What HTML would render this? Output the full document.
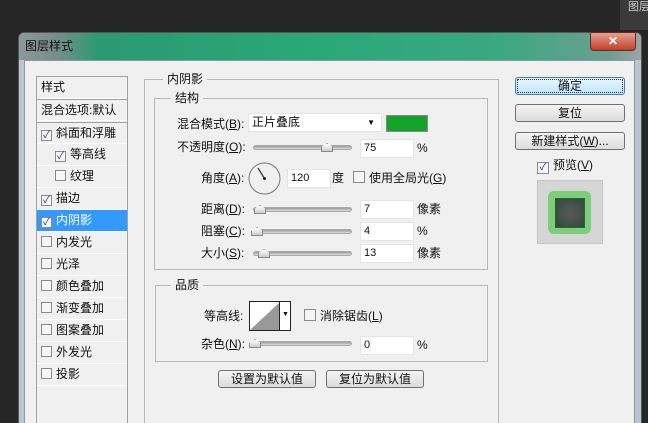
<!DOCTYPE html><html><head><meta charset="utf-8"><style>
*{margin:0;padding:0;box-sizing:border-box}
html{width:648px;height:423px;overflow:hidden}
body{width:648px;height:423px;background:#262626;position:relative;overflow:hidden;font-family:"Liberation Sans","Noto Sans CJK SC",sans-serif;font-size:12px;color:#111}
.a{position:absolute}
.t{position:absolute;white-space:nowrap;line-height:14px}
.frame{left:18px;top:32px;width:624px;height:400px;background:#b9c6cf;border-radius:6px 6px 0 0;border:1px solid #555}
.title{left:19px;top:33px;width:622px;height:27px;border-radius:5px 5px 0 0;background:linear-gradient(90deg,#8a9a98 0,#7a8e8c 35px,#2a9a70 80px,#2aa878 300px,#3aa880 480px,#6aa090 590px,#9aa4a8 622px)}
.client{left:24px;top:60px;width:611px;height:370px;background:#f0f0f0;border:1px solid #8a9aa4}
.lp{left:36px;top:76px;width:92px;height:360px;border:1px solid #a0a0a0;background:#f0f0f0}
.li{position:absolute;left:0;width:90px;height:22px;border-bottom:1px solid #fff;line-height:21px;padding-left:4px}
.cb{display:inline-block;width:11px;height:11px;border:1px solid #8a8a8a;background:#f6f6f6;vertical-align:-1px;margin-right:4px;font-size:10px;line-height:9px;text-align:center;color:#2a2a8a}
.gb{position:absolute;border:1px solid #b8b8b8}
.gl{position:absolute;background:#f0f0f0;padding:0 4px;line-height:14px}
.inp{position:absolute;height:19px;background:#fff;border:1px solid #e4e4e4;padding-left:3px;line-height:17px;font-size:11px}
.tr{position:absolute;height:5px;background:linear-gradient(#999,#ddd);border-radius:3px;border:1px solid #aaa}
.th{position:absolute;width:12px;height:9px;background:linear-gradient(#fff,#ccc);border:1px solid #888;clip-path:polygon(50% 0,100% 45%,100% 100%,0 100%,0 45%)}
.btn{position:absolute;height:18px;border:1px solid #707070;border-radius:3px;background:linear-gradient(#f4f4f4,#dcdcdc);text-align:center;line-height:16px}
</style></head><body>
<div class="a" style="left:620px;top:0;width:28px;height:30px;background:#3a3a3a"></div>
<div class="t" style="left:628px;top:0;color:#ccc;font-size:11px">图层</div>
<div class="a frame"></div>
<div class="a title"></div>
<div class="t" style="left:25px;top:39px;font-size:12px">图层样式</div>
<div class="a" style="left:590px;top:32px;width:46px;height:19px;border-radius:0 0 4px 4px;background:linear-gradient(#e8a090,#c0402c);border:1px solid #6a2a20;color:#fff;text-align:center;font-weight:bold;line-height:17px">✕</div>
<div class="a client"></div>

<div class="a lp">
<div class="li" style="top:0">样式</div>
<div class="li" style="top:22px;border-top:1px solid #a0a0a0">混合选项:默认</div>
<div class="li" style="top:45px;border-top:1px solid #a0a0a0"><span class="cb">✓</span>斜面和浮雕</div>
<div class="li" style="top:67px;padding-left:18px"><span class="cb">✓</span>等高线</div>
<div class="li" style="top:89px;padding-left:18px"><span class="cb"></span>纹理</div>
<div class="li" style="top:111px"><span class="cb">✓</span>描边</div>
<div class="li" style="top:133px;background:#3399ff;color:#fff"><span class="cb">✓</span>内阴影</div>
<div class="li" style="top:155px"><span class="cb"></span>内发光</div>
<div class="li" style="top:177px"><span class="cb"></span>光泽</div>
<div class="li" style="top:199px"><span class="cb"></span>颜色叠加</div>
<div class="li" style="top:221px"><span class="cb"></span>渐变叠加</div>
<div class="li" style="top:243px"><span class="cb"></span>图案叠加</div>
<div class="li" style="top:265px"><span class="cb"></span>外发光</div>
<div class="li" style="top:287px"><span class="cb"></span>投影</div>
</div>

<div class="gb" style="left:144px;top:79px;width:355px;height:360px"></div>
<div class="gl" style="left:163px;top:72px">内阴影</div>
<div class="gb" style="left:154px;top:98px;width:334px;height:172px"></div>
<div class="gl" style="left:171px;top:91px">结构</div>
<div class="gb" style="left:155px;top:285px;width:333px;height:77px"></div>
<div class="gl" style="left:171px;top:278px">品质</div>

<div class="t" style="left:177px;top:117px">混合模式(<u>B</u>):</div>
<div class="inp" style="left:248px;top:113px;width:134px;font-size:12px">正片叠底<span style="position:absolute;right:6px;top:0;font-size:8px">▼</span></div>
<div class="a" style="left:386px;top:115px;width:42px;height:17px;background:#13a52a;border:1px solid #888"></div>

<div class="t" style="left:177px;top:140px">不透明度(<u>O</u>):</div>
<div class="tr" style="left:253px;top:145px;width:99px"></div><div class="th" style="left:321px;top:143px"></div>
<div class="inp" style="left:360px;top:139px;width:54px">75</div><div class="t" style="left:417px;top:141px">%</div>

<div class="t" style="left:201px;top:171px">角度(<u>A</u>):</div>
<svg class="a" style="left:248px;top:162px" width="33" height="33"><circle cx="16.5" cy="16.5" r="15.5" fill="#f0f0f0" stroke="#777"/><line x1="16.5" y1="16.5" x2="10" y2="6" stroke="#333" stroke-width="1.2"/><circle cx="16.5" cy="16.5" r="1.5" fill="#222"/></svg>
<div class="inp" style="left:287px;top:169px;width:44px">120</div>
<div class="t" style="left:332px;top:171px">度</div>
<div class="t" style="left:353px;top:171px"><span class="cb" style="width:12px;height:12px"></span>使用全局光(<u>G</u>)</div>

<div class="t" style="left:201px;top:202px">距离(<u>D</u>):</div>
<div class="tr" style="left:253px;top:207px;width:99px"></div><div class="th" style="left:254px;top:205px"></div>
<div class="inp" style="left:360px;top:200px;width:54px">7</div><div class="t" style="left:417px;top:202px">像素</div>

<div class="t" style="left:201px;top:224px">阻塞(<u>C</u>):</div>
<div class="tr" style="left:253px;top:229px;width:99px"></div><div class="th" style="left:251px;top:227px"></div>
<div class="inp" style="left:360px;top:222px;width:54px">4</div><div class="t" style="left:417px;top:224px">%</div>

<div class="t" style="left:201px;top:246px">大小(<u>S</u>):</div>
<div class="tr" style="left:253px;top:251px;width:99px"></div><div class="th" style="left:258px;top:249px"></div>
<div class="inp" style="left:360px;top:244px;width:54px">13</div><div class="t" style="left:417px;top:246px">像素</div>

<div class="t" style="left:204px;top:309px">等高线:</div>
<div class="a" style="left:249px;top:301px;width:42px;height:30px;border:1px solid #222;background:#fff"></div>
<svg class="a" style="left:250px;top:302px" width="30" height="28"><polygon points="0,28 30,0 30,28" fill="#999"/></svg>
<div class="a" style="left:279px;top:302px;width:1px;height:28px;background:#222"></div>
<div class="t" style="left:282px;top:308px;font-size:7px">▼</div>
<div class="t" style="left:304px;top:309px"><span class="cb" style="width:12px;height:12px"></span>消除锯齿(<u>L</u>)</div>

<div class="t" style="left:201px;top:337px">杂色(<u>N</u>):</div>
<div class="tr" style="left:250px;top:341px;width:102px"></div><div class="th" style="left:249px;top:339px"></div>
<div class="inp" style="left:360px;top:336px;width:54px">0</div><div class="t" style="left:417px;top:338px">%</div>

<div class="btn" style="left:218px;top:370px;width:98px">设置为默认值</div>
<div class="btn" style="left:326px;top:370px;width:98px">复位为默认值</div>

<div class="btn" style="left:515px;top:77px;width:110px;border-color:#3c7fb1;background:linear-gradient(#eaf6fd,#bee6fd);outline:1px dotted #333;outline-offset:-3px">确定</div>
<div class="btn" style="left:515px;top:104px;width:110px">复位</div>
<div class="btn" style="left:515px;top:132px;width:110px">新建样式(<u>W</u>)...</div>
<div class="t" style="left:537px;top:158px"><span class="cb" style="width:12px;height:12px">✓</span>预览(<u>V</u>)</div>
<div class="a" style="left:537px;top:180px;width:66px;height:64px;background:#d6d6d6;border:1px solid #c4c4c4"></div>
<div class="a" style="left:548px;top:191px;width:43px;height:43px;border-radius:6px;background:#7acf78"></div>
<div class="a" style="left:555px;top:198px;width:30px;height:30px;background:radial-gradient(#5a5a5a,#2f4a3a);border:1px solid #2f5f3a"></div>
</body></html>
